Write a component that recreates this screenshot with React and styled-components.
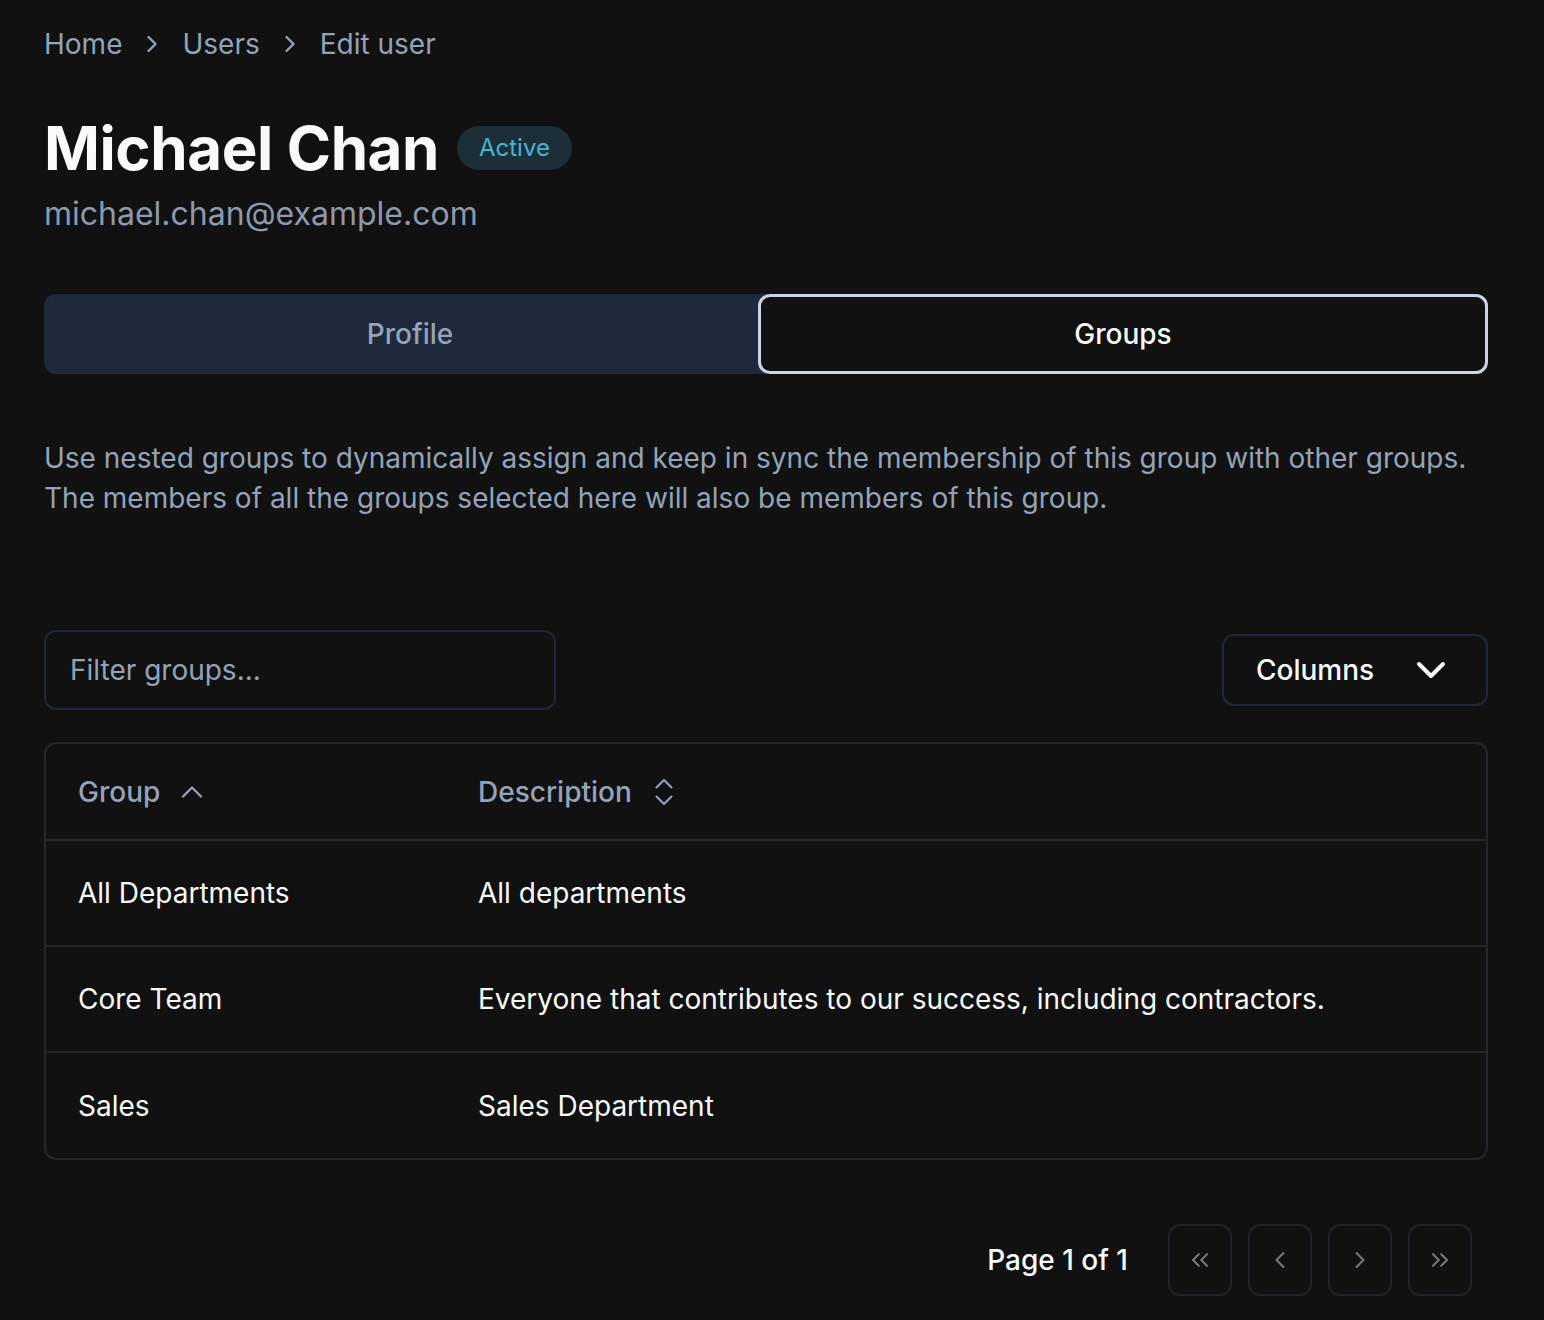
import React, { useState } from 'react';
import styled, { createGlobalStyle } from 'styled-components';
import {
  ChevronRight,
  ChevronUp,
  ChevronDown,
  ChevronsUpDown,
  ChevronsLeft,
  ChevronsRight,
  ChevronLeft,
} from 'lucide-react';

const groups = [
  { name: 'All Departments', description: 'All departments' },
  { name: 'Core Team', description: 'Everyone that contributes to our success, including contractors.' },
  { name: 'Sales', description: 'Sales Department' },
];

const GlobalStyle = createGlobalStyle`
  * {
    box-sizing: border-box;
  }
  body {
    margin: 0;
    background: #111111;
    font-family: Inter, "Noto Sans", sans-serif;
    color: #f8fafc;
  }
`;

const App = () => {
  const [tab, setTab] = useState('groups');
  const [filter, setFilter] = useState('');

  return (
    <Page>
      <GlobalStyle />
      <Breadcrumb>
        <Crumb>Home</Crumb>
        <ChevronRight size={28} strokeWidth={2} />
        <Crumb>Users</Crumb>
        <ChevronRight size={28} strokeWidth={2} />
        <Crumb>Edit user</Crumb>
      </Breadcrumb>

      <TitleRow>
        <Title>Michael Chan</Title>
        <Badge>Active</Badge>
      </TitleRow>
      <Email>michael.chan@example.com</Email>

      <TabList>
        <Tab active={tab === 'profile'} onClick={() => setTab('profile')}>
          Profile
        </Tab>
        <Tab active={tab === 'groups'} onClick={() => setTab('groups')}>
          Groups
        </Tab>
      </TabList>

      <Description>
        Use nested groups to dynamically assign and keep in sync the membership of this group with other groups.
        <br />
        The members of all the groups selected here will also be members of this group.
      </Description>

      <Toolbar>
        <FilterInput
          placeholder="Filter groups..."
          value={filter}
          onChange={(e) => setFilter(e.target.value)}
        />
        <ColumnsButton>
          Columns
          <ChevronDown size={48} strokeWidth={2} />
        </ColumnsButton>
      </Toolbar>

      <TableWrap>
        <Table>
          <thead>
            <tr>
              <Th width="400px">
                <HeadInner>
                  Group
                  <ChevronUp size={36} strokeWidth={1.5} />
                </HeadInner>
              </Th>
              <Th>
                <HeadInner>
                  Description
                  <ChevronsUpDown size={36} strokeWidth={1.4} />
                </HeadInner>
              </Th>
            </tr>
          </thead>
          <tbody>
            {groups
              .filter((g) => g.name.toLowerCase().includes(filter.toLowerCase()))
              .map((g) => (
                <Row key={g.name}>
                  <Td>{g.name}</Td>
                  <Td>{g.description}</Td>
                </Row>
              ))}
          </tbody>
        </Table>
      </TableWrap>

      <Pagination>
        <PageLabel>Page 1 of 1</PageLabel>
        <PageButtons>
          <PageButton disabled>
            <ChevronsLeft size={28} strokeWidth={1.75} />
          </PageButton>
          <PageButton disabled>
            <ChevronLeft size={28} strokeWidth={1.75} />
          </PageButton>
          <PageButton disabled>
            <ChevronRight size={28} strokeWidth={1.75} />
          </PageButton>
          <PageButton disabled>
            <ChevronsRight size={28} strokeWidth={1.75} />
          </PageButton>
        </PageButtons>
      </Pagination>
    </Page>
  );
};

const Page = styled.div`
  padding: 24px 56px 24px 44px;
  display: flex;
  flex-direction: column;
`;

const Breadcrumb = styled.nav`
  display: flex;
  align-items: center;
  gap: 16px;
  height: 40px;
  color: #94a3b8;
  svg {
    color: #94a3b8;
  }
`;

const Crumb = styled.span`
  font-size: 28px;
  line-height: 40px;
`;

const TitleRow = styled.div`
  display: flex;
  align-items: center;
  gap: 18px;
  margin-top: 52px;
`;

const Title = styled.h1`
  margin: 0;
  font-size: 60px;
  line-height: 64px;
  font-weight: 700;
  letter-spacing: -0.4px;
  color: #f8fafc;
`;

const Badge = styled.span`
  display: inline-flex;
  align-items: center;
  height: 44px;
  padding: 0 22px 2px;
  border-radius: 999px;
  background: #1c2f38;
  color: #45b4d6;
  font-size: 24px;
  font-weight: 400;
`;

const Email = styled.div`
  margin-top: 14px;
  font-size: 32px;
  line-height: 40px;
  color: #8d99ad;
`;

const TabList = styled.div`
  margin-top: 60px;
  display: grid;
  grid-template-columns: 1fr 1fr;
  height: 80px;
  background: #1e293b;
  border-radius: 12px;
`;

const Tab = styled.button`
  font-family: inherit;
  font-size: 28px;
  font-weight: 500;
  border-radius: 12px;
  cursor: pointer;
  border: ${(p) => (p.active ? '3px solid #cbd5e1' : '3px solid transparent')};
  background: ${(p) => (p.active ? '#111111' : 'transparent')};
  color: ${(p) => (p.active ? '#f8fafc' : '#94a3b8')};
  margin-left: ${(p) => (p.active ? '-8px' : '0')};
  padding-left: ${(p) => (p.active ? '6px' : '16px')};
`;

const Description = styled.p`
  margin: 64px 0 0;
  font-size: 28px;
  line-height: 40px;
  color: #94a3b8;
`;

const Toolbar = styled.div`
  margin-top: 112px;
  display: flex;
  align-items: center;
  justify-content: space-between;
`;

const FilterInput = styled.input`
  width: 512px;
  height: 80px;
  padding: 0 24px;
  border: 2px solid #1e293b;
  border-radius: 12px;
  background: transparent;
  font-family: inherit;
  font-size: 28px;
  color: #f8fafc;
  outline: none;
  &::placeholder {
    color: #94a3b8;
  }
`;

const ColumnsButton = styled.button`
  display: flex;
  align-items: center;
  justify-content: space-between;
  width: 266px;
  height: 72px;
  padding: 0 31px 0 32px;
  border: 2px solid #1e293b;
  border-radius: 12px;
  background: transparent;
  font-family: inherit;
  font-size: 28px;
  font-weight: 500;
  color: #f8fafc;
  cursor: pointer;
`;

const TableWrap = styled.div`
  margin-top: 32px;
  border: 2px solid #26272c;
  border-radius: 12px;
  overflow: hidden;
`;

const Table = styled.table`
  width: 100%;
  border-collapse: collapse;
`;

const Th = styled.th`
  width: ${(p) => p.width || 'auto'};
  height: 96px;
  padding: 0 32px;
  text-align: left;
  font-size: 28px;
  font-weight: 500;
  color: #94a3b8;
  border-bottom: 2px solid #26272c;
`;

const HeadInner = styled.span`
  display: inline-flex;
  align-items: center;
  gap: 14px;
`;

const Row = styled.tr`
  & + & td {
    border-top: 2px solid #26272c;
  }
`;

const Td = styled.td`
  height: 106px;
  padding: 0 32px;
  font-size: 28px;
  color: #f8fafc;
`;

const Pagination = styled.div`
  margin-top: 64px;
  display: flex;
  align-items: center;
  justify-content: flex-end;
  gap: 40px;
  padding-right: 16px;
`;

const PageLabel = styled.span`
  font-size: 28px;
  font-weight: 500;
  color: #f8fafc;
`;

const PageButtons = styled.div`
  display: flex;
  gap: 16px;
`;

const PageButton = styled.button`
  width: 64px;
  height: 72px;
  display: flex;
  align-items: center;
  justify-content: center;
  border: 2px solid #1e222a;
  border-radius: 12px;
  background: transparent;
  color: #75777c;
  &:disabled {
    cursor: default;
  }
`;

export default App;
